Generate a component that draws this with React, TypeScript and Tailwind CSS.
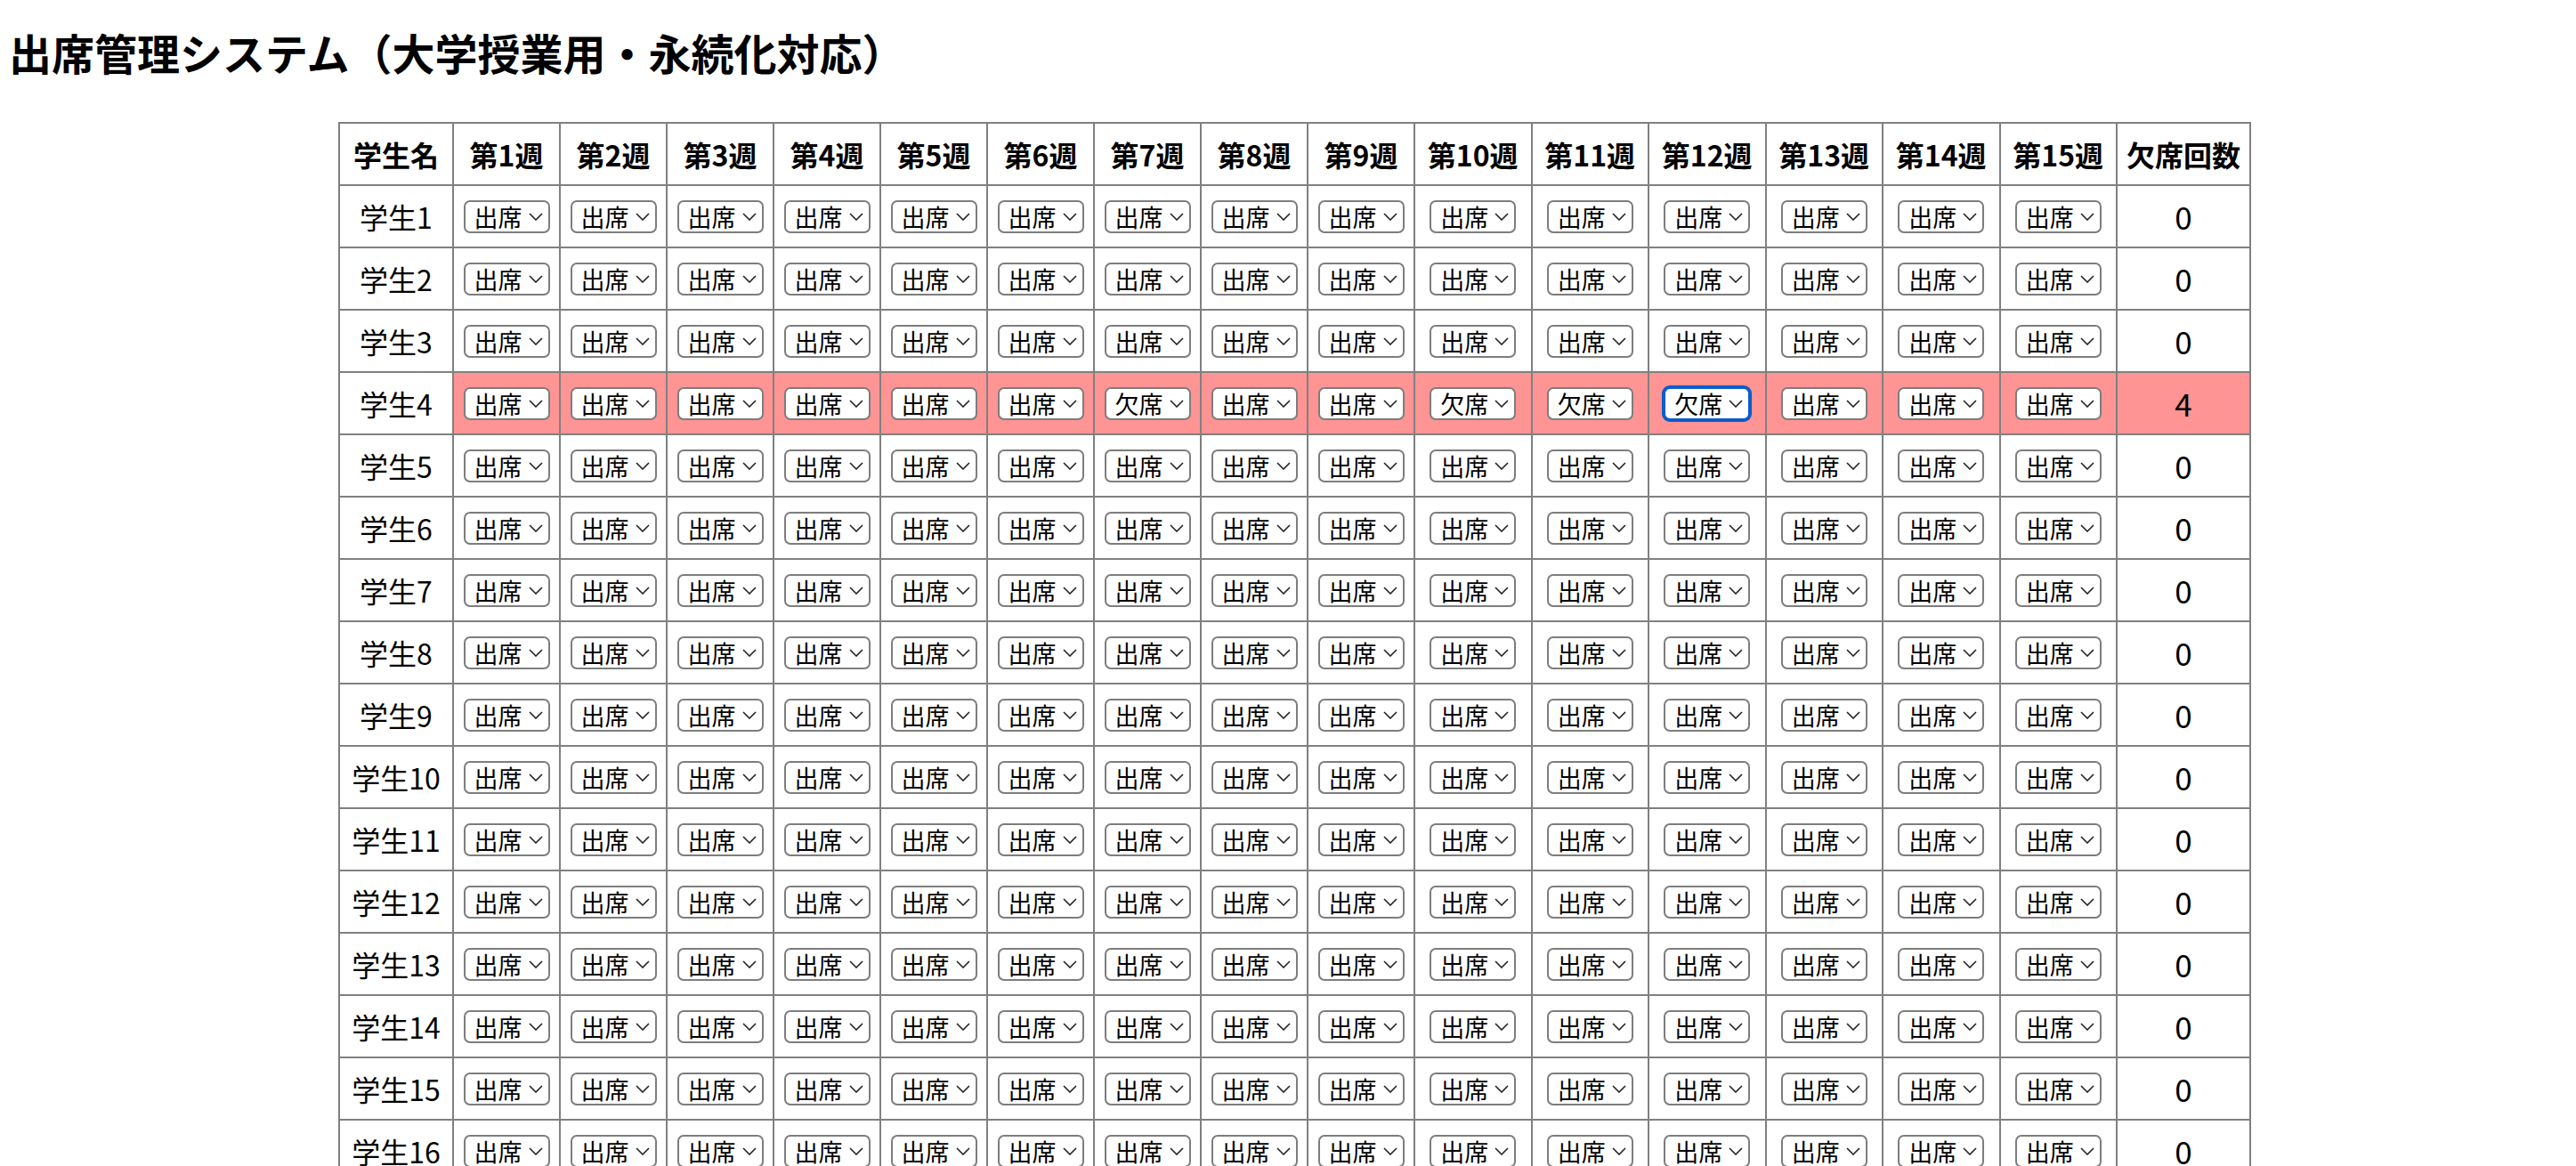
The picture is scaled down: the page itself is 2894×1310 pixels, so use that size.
import { useEffect, useState } from "react";

// ─────────────────────────────
// Constants
// ─────────────────────────────
const STORAGE_KEY = "attendance-system-university";
const STUDENTS = Array.from({ length: 20 }, (_, i) => `学生${i + 1}`);
const WEEKS = Array.from({ length: 15 }, (_, i) => `第${i + 1}週`);
const WARN_LIMIT = 4;

type Status = "出席" | "欠席";

const cellBorder = "border-2 border-[#808080] p-0";

function seedData(): Status[][] {
  const rows = STUDENTS.map(() => WEEKS.map(() => "出席" as Status));
  [6, 9, 10, 11].forEach((w) => (rows[3][w] = "欠席"));
  return rows;
}

// ─────────────────────────────
// Select (出席 / 欠席)
// ─────────────────────────────
function StatusSelect({
  value,
  focused,
  onChange,
  onFocus,
}: {
  value: Status;
  focused: boolean;
  onChange: (v: Status) => void;
  onFocus: () => void;
}) {
  return (
    <div
      className={`relative mx-auto flex h-[37px] w-[97px] items-center rounded-[7px] bg-white pl-[10px] ${
        focused ? "border-2 border-[#0b5ccd] ring-2 ring-[#0b5ccd]" : "border-2 border-[#7d7d7d]"
      }`}
    >
      <span className="text-[27px] leading-none text-black">{value}</span>
      <svg className="ml-auto mr-[6px]" width="16" height="9" viewBox="0 0 16 9">
        <polyline points="1,1 8,8 15,1" fill="none" stroke="#222" strokeWidth="1.6" />
      </svg>
      <select
        value={value}
        onChange={(e) => onChange(e.target.value as Status)}
        onFocus={onFocus}
        className="absolute inset-0 cursor-pointer opacity-0"
      >
        <option value="出席">出席</option>
        <option value="欠席">欠席</option>
      </select>
    </div>
  );
}

// ─────────────────────────────
// Main
// ─────────────────────────────
export default function App() {
  const [data, setData] = useState<Status[][]>(seedData);
  const [active, setActive] = useState<[number, number]>([3, 11]);

  useEffect(() => {
    const saved = localStorage.getItem(STORAGE_KEY);
    if (saved) {
      try {
        const parsed = JSON.parse(saved);
        if (Array.isArray(parsed) && parsed.length === STUDENTS.length) setData(parsed);
      } catch {
        // ignore broken data
      }
    }
  }, []);

  const update = (s: number, w: number, v: Status) => {
    setData((prev) => {
      const next = prev.map((row) => [...row]);
      next[s][w] = v;
      localStorage.setItem(STORAGE_KEY, JSON.stringify(next));
      return next;
    });
  };

  return (
    <div className="min-h-screen bg-white pt-[24px] text-black font-['Noto_Sans_CJK_JP','Noto_Sans',sans-serif]">
      <h1 className="pl-[10px] text-[48px] font-bold leading-[68px]">
        出席管理システム（大学授業用・永続化対応）
      </h1>

      <div className="mt-[45px] pl-[15px]">
        <table className="mx-auto border-collapse text-[32px]">
          <thead>
            <tr>
              <th className={cellBorder}>
                <div className="flex h-[68px] w-[126px] items-center justify-center font-bold">学生名</div>
              </th>
              {WEEKS.map((week, w) => (
                <th key={week} className={cellBorder}>
                  <div
                    className={`flex h-[68px] items-center justify-center font-bold ${
                      w < 9 ? "w-[118px]" : "w-[129.5px]"
                    }`}
                  >
                    {week}
                  </div>
                </th>
              ))}
              <th className={cellBorder}>
                <div className="flex h-[68px] w-[148px] items-center justify-center font-bold">欠席回数</div>
              </th>
            </tr>
          </thead>
          <tbody>
            {STUDENTS.map((name, s) => {
              const absences = data[s].filter((v) => v === "欠席").length;
              const warn = absences >= WARN_LIMIT;
              const tint = warn ? "bg-[#ff9494]" : "bg-white";
              return (
                <tr key={name}>
                  <td className={`${cellBorder} bg-white`}>
                    <div className="flex h-[68px] items-center justify-center">{name}</div>
                  </td>
                  {WEEKS.map((week, w) => (
                    <td key={week} className={`${cellBorder} ${tint}`}>
                      <div className="flex h-[68px] items-center justify-center">
                        <StatusSelect
                          value={data[s][w]}
                          focused={active[0] === s && active[1] === w}
                          onChange={(v) => update(s, w, v)}
                          onFocus={() => setActive([s, w])}
                        />
                      </div>
                    </td>
                  ))}
                  <td className={`${cellBorder} ${tint}`}>
                    <div className="flex h-[68px] items-center justify-center text-[35px]">{absences}</div>
                  </td>
                </tr>
              );
            })}
          </tbody>
        </table>
      </div>
    </div>
  );
}
